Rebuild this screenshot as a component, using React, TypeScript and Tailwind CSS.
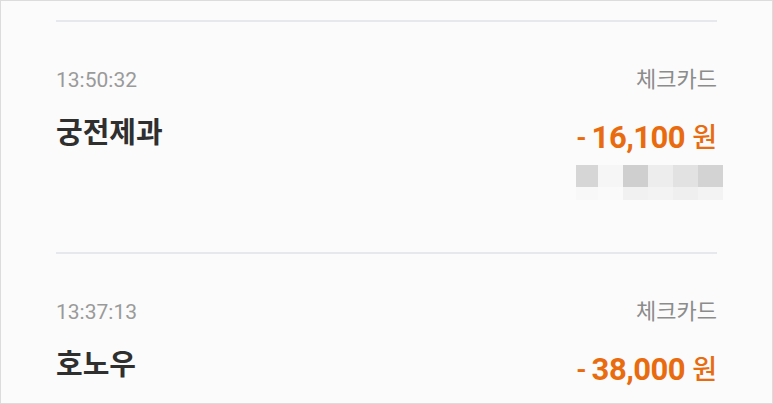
import React from "react";

interface Payment {
  id: number;
  time: string;
  method: string;
  store: string;
  amount: string;
  masked?: boolean;
}

const payments: Payment[] = [
  { id: 1, time: "13:50:32", method: "체크카드", store: "궁전제과", amount: "16,100", masked: true },
  { id: 2, time: "13:37:13", method: "체크카드", store: "호노우", amount: "38,000" },
];

// blurred-out card info under the amount
const MaskedInfo: React.FC = () => (
  <div className="mt-[9px] -mr-[6px] flex flex-col">
    <div className="flex h-[22px]">
      <div className="w-[22px] bg-[#d6d6d6]" />
      <div className="w-[25px] bg-[#f6f6f6]" />
      <div className="w-[25px] bg-[#cfcfcf]" />
      <div className="w-[25px] bg-[#ededed]" />
      <div className="w-[25px] bg-[#e2e2e2]" />
      <div className="w-[25px] bg-[#d3d3d3]" />
    </div>
    <div className="flex h-[13px]">
      <div className="w-[22px] bg-[#f8f8f8]" />
      <div className="w-[25px] bg-[#fafafa]" />
      <div className="w-[25px] bg-[#f1f1f1]" />
      <div className="w-[25px] bg-[#f3f3f3]" />
      <div className="w-[25px] bg-[#efefef]" />
      <div className="w-[25px] bg-[#f3f3f3]" />
    </div>
  </div>
);

const PaymentItem: React.FC<{ p: Payment }> = ({ p }) => (
  <section className="flex flex-col">
    <div className="h-[2px] bg-[#e7e8ee]" />
    <div className="mt-[46px] flex h-[24px] items-center justify-between leading-[24px]">
      <span className="text-[21px] text-[#9a9a9a]">{p.time}</span>
      <span className="text-[22px] text-[#8c8c8c]">{p.method}</span>
    </div>
    <div className="mt-[25px] flex items-start justify-between">
      <span className="text-[29px] font-bold leading-[32px] text-[#2f2f2f]">
        {p.store}
      </span>
      <div className="flex flex-col items-end">
        <div className="mt-[3px] flex h-[36px] items-center leading-[36px] text-[#e96b10]">
          <span className="mr-[5px] text-[26px] font-bold">-</span>
          <span className="text-[31px] font-bold tracking-[-0.5px]">{p.amount}</span>
          <span className="ml-[7px] text-[27px] font-medium">원</span>
        </div>
        {p.masked && <MaskedInfo />}
      </div>
    </div>
  </section>
);

export default function App() {
  return (
    <div
      className="h-[404px] w-[773px] overflow-hidden border border-[#dcdcdc] bg-[#fbfbfb] px-[55px] pt-[19px]"
      style={{ fontFamily: 'Roboto, "Noto Sans CJK KR", sans-serif' }}
    >
      <PaymentItem p={payments[0]} />
      <div className="mt-[52px]">
        <PaymentItem p={payments[1]} />
      </div>
    </div>
  );
}
